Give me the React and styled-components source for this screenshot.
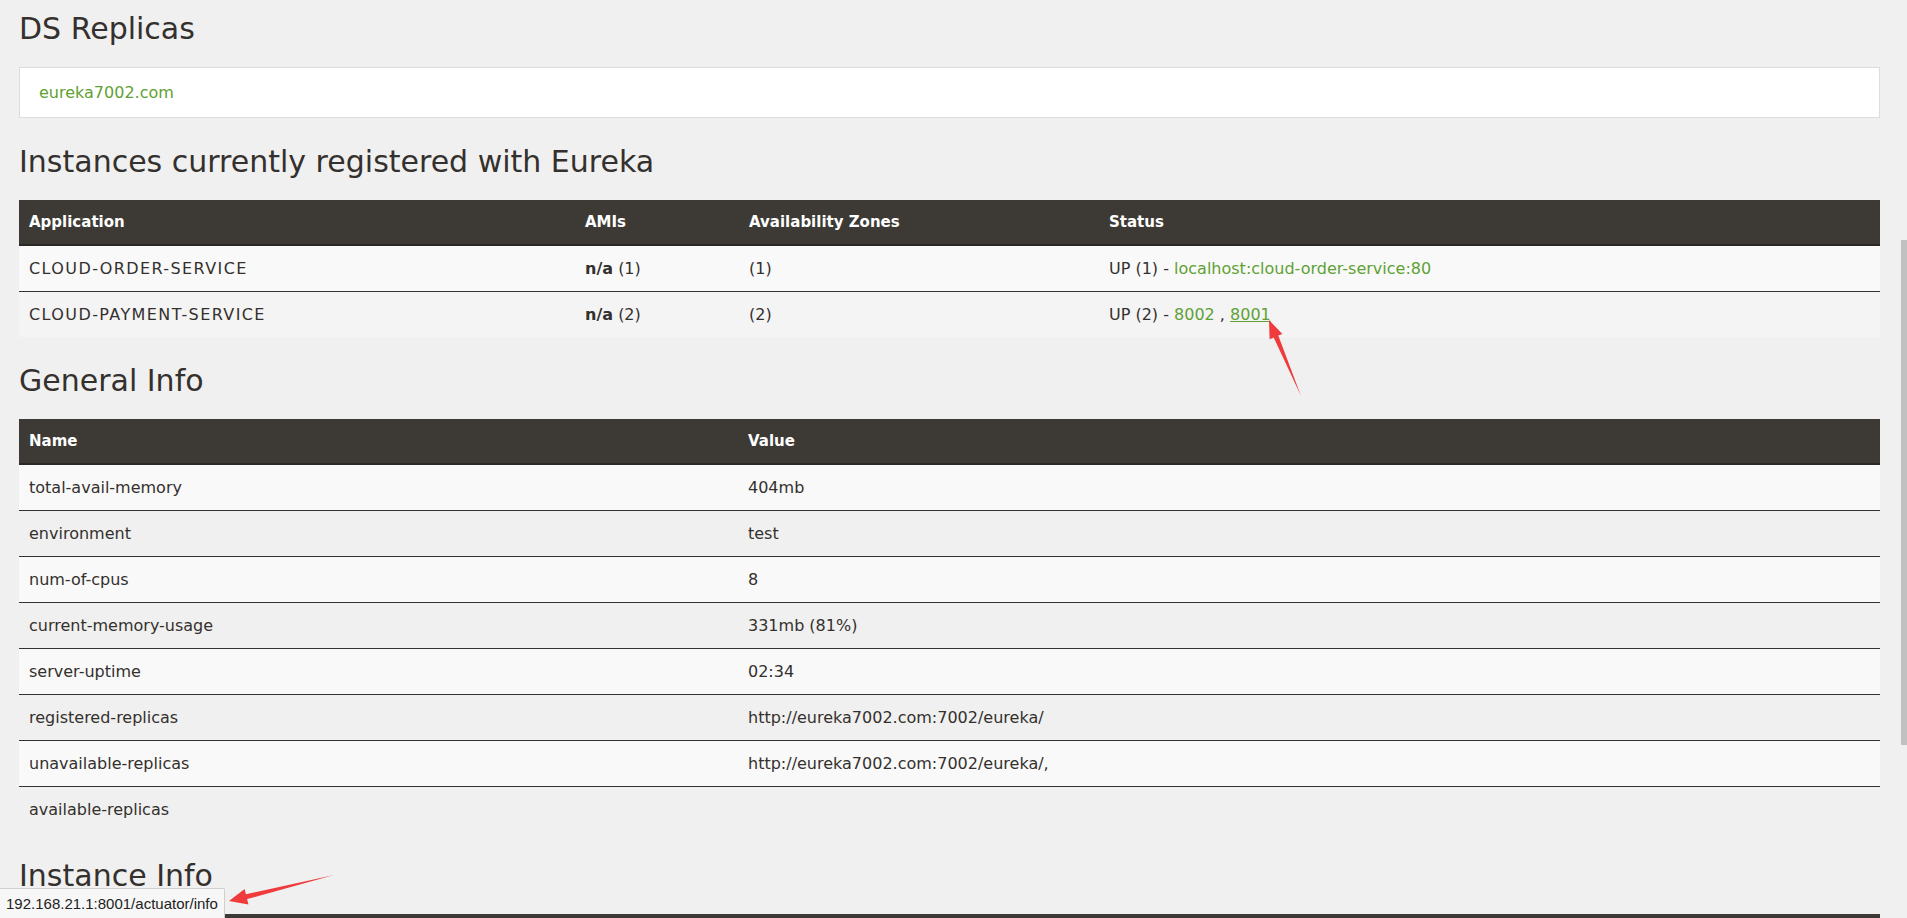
import React from "react";
import styled, { createGlobalStyle } from "styled-components";

const GlobalStyle = createGlobalStyle`
  html, body {
    margin: 0;
    padding: 0;
    background: #f0f0f0;
    overflow: hidden;
  }
  body {
    font-family: "DejaVu Sans", "Open Sans", sans-serif;
    color: #34302d;
  }
`;

const Page = styled.div`
  position: relative;
  display: flex;
  flex-direction: column;
  box-sizing: border-box;
  width: 1907px;
  height: 918px;
  padding: 0 27px 0 19px;
  overflow: hidden;
`;

const Heading = styled.h2`
  font-family: "DejaVu Sans", sans-serif;
  font-weight: normal;
  font-size: 30px;
  line-height: 33px;
  color: #34302d;
  margin: ${(p) => (p.$first ? "12px" : "27px")} 0 22px;
  white-space: nowrap;
`;

const ReplicaBox = styled.div`
  flex-shrink: 0;
  background: #ffffff;
  border: 1px solid #dddddd;
  height: 49px;
  line-height: 49px;
  padding: 0 19px;
  font-size: 16px;
`;

const Link = styled.a`
  color: #5fa134;
  text-decoration: ${(p) => (p.$hover ? "underline" : "none")};
  cursor: pointer;
`;

const Table = styled.div`
  display: flex;
  flex-direction: column;
  flex-shrink: 0;
`;

const Row = styled.div`
  display: grid;
  grid-template-columns: ${(p) => p.$cols};
  align-items: center;
  box-sizing: border-box;
  height: 46px;
  font-size: 16px;
  background: ${(p) => (p.$alt ? p.$altBg : "#f9f9f9")};
  border-bottom: 1px solid #333333;
  &:last-child {
    border-bottom: none;
    height: 45px;
  }
`;

const HeadRow = styled(Row)`
  background: #3d3a35;
  color: #ffffff;
  font-weight: bold;
  font-size: 15px;
  border-bottom: 2px solid #2c2925;
`;

const Cell = styled.div`
  padding: 0 10px;
  white-space: nowrap;
  overflow: hidden;
  letter-spacing: ${(p) => (p.$caps ? "1.4px" : "normal")};
`;

const Strong = styled.b`
  font-weight: bold;
`;

const ScrollThumb = styled.div`
  position: fixed;
  right: 0;
  top: 240px;
  width: 6px;
  height: 505px;
  background: #c1c1c1;
`;

const StatusBubble = styled.div`
  position: fixed;
  left: 0;
  bottom: 0;
  box-sizing: border-box;
  height: 30px;
  width: 225px;
  padding-left: 6px;
  background: #f7f7f7;
  border-top: 1px solid #cfcfcf;
  border-right: 1px solid #cfcfcf;
  border-top-right-radius: 2px;
  font-family: "Liberation Sans", Arial, sans-serif;
  font-size: 15px;
  line-height: 29px;
  color: #222222;
  white-space: nowrap;
`;

const Annotations = styled.svg`
  position: absolute;
  left: 0;
  top: 0;
  pointer-events: none;
`;

const APP_COLS = "556px 164px 360px 1fr";
const INFO_COLS = "719px 1fr";

const apps = [
  {
    name: "CLOUD-ORDER-SERVICE",
    ami: "(1)",
    zones: "(1)",
    status: "UP (1) - ",
    links: [{ text: "localhost:cloud-order-service:80" }],
  },
  {
    name: "CLOUD-PAYMENT-SERVICE",
    ami: "(2)",
    zones: "(2)",
    status: "UP (2) - ",
    links: [{ text: "8002" }, { text: "8001", hover: true }],
  },
];

const info = [
  ["total-avail-memory", "404mb"],
  ["environment", "test"],
  ["num-of-cpus", "8"],
  ["current-memory-usage", "331mb (81%)"],
  ["server-uptime", "02:34"],
  ["registered-replicas", "http://eureka7002.com:7002/eureka/"],
  ["unavailable-replicas", "http://eureka7002.com:7002/eureka/,"],
  ["available-replicas", ""],
];

export default function App() {
  return (
    <>
      <GlobalStyle />
      <Page>
        <Heading $first>DS Replicas</Heading>
        <ReplicaBox>
          <Link>eureka7002.com</Link>
        </ReplicaBox>

        <Heading>Instances currently registered with Eureka</Heading>
        <Table>
          <HeadRow $cols={APP_COLS}>
            <Cell>Application</Cell>
            <Cell>AMIs</Cell>
            <Cell>Availability Zones</Cell>
            <Cell>Status</Cell>
          </HeadRow>
          {apps.map((a, i) => (
            <Row key={a.name} $cols={APP_COLS} $alt={i % 2 === 1} $altBg="#f4f4f4">
              <Cell $caps>{a.name}</Cell>
              <Cell>
                <Strong>n/a</Strong> {a.ami}
              </Cell>
              <Cell>{a.zones}</Cell>
              <Cell>
                {a.status}
                {a.links.map((l, j) => (
                  <React.Fragment key={l.text}>
                    {j > 0 ? " , " : ""}
                    <Link $hover={l.hover}>{l.text}</Link>
                  </React.Fragment>
                ))}
              </Cell>
            </Row>
          ))}
        </Table>

        <Heading>General Info</Heading>
        <Table>
          <HeadRow $cols={INFO_COLS}>
            <Cell>Name</Cell>
            <Cell>Value</Cell>
          </HeadRow>
          {info.map(([k, v], i) => (
            <Row key={k} $cols={INFO_COLS} $alt={i % 2 === 1} $altBg="#f0f0f0">
              <Cell>{k}</Cell>
              <Cell>{v}</Cell>
            </Row>
          ))}
        </Table>

        <Heading>Instance Info</Heading>
        <Table>
          <HeadRow $cols={INFO_COLS}>
            <Cell />
            <Cell />
          </HeadRow>
        </Table>

        <Annotations width="1907" height="918" viewBox="0 0 1907 918">
          <polygon
            fill="#ef3b3b"
            points="1301,396 1278.3,335.6 1282.4,333.9 1269,320 1269.6,339.3 1273.7,337.6"
          />
          <polygon
            fill="#ef3b3b"
            points="334,875 245.9,894.3 244.6,888.9 229,901 248.4,904.5 247.1,899.1"
          />
        </Annotations>
      </Page>
      <ScrollThumb />
      <StatusBubble>192.168.21.1:8001/actuator/info</StatusBubble>
    </>
  );
}
